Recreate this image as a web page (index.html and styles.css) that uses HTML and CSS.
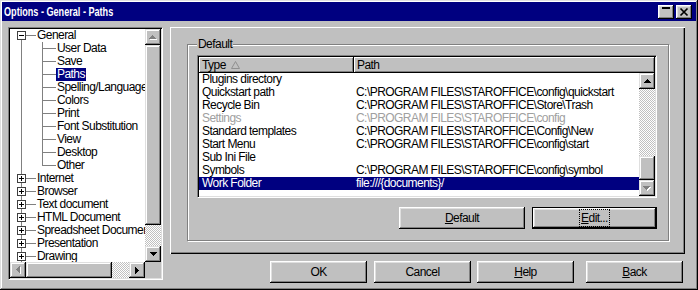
FILE: index.html
```html
<!DOCTYPE html>
<html lang="en">

<head>
    <meta charset="UTF-8">
    <title>Options - General - Paths</title>
    <link rel="stylesheet" href="styles.css">
</head>

<body>
    <div class="window">
        <div class="titlebar">
            <span class="title">Options - General - Paths</span>
            <div class="title-buttons">
                <span class="tbtn"><svg width="16" height="14"><rect x="4" y="2" width="8" height="2" fill="#000"/></svg></span>
                <span class="tbtn"><svg width="16" height="14"><path d="M4.5 3.5l7 7M11.5 3.5l-7 7" stroke="#000" stroke-width="1.7"/></svg></span>
            </div>
        </div>

        <div class="main">
            <!-- Category tree -->
            <div class="tree">
                <div class="tree-view">
                    <div class="tree-items">
                        <div class="node first"><span class="gut"><svg class="box" width="9" height="9"><rect x="0.5" y="0.5" width="8" height="8" fill="#fff" stroke="#404040"/><path d="M2 4.5h5" stroke="#000"/></svg></span><span class="hline"></span><span class="label">General</span></div>
                        <div class="node"><span class="gut"></span><span class="indent"></span><span class="branch"></span><span class="label">User Data</span></div>
                        <div class="node"><span class="gut"></span><span class="indent"></span><span class="branch"></span><span class="label">Save</span></div>
                        <div class="node"><span class="gut"></span><span class="indent"></span><span class="branch"></span><span class="label selected">Paths</span></div>
                        <div class="node"><span class="gut"></span><span class="indent"></span><span class="branch"></span><span class="label">Spelling/Language</span></div>
                        <div class="node"><span class="gut"></span><span class="indent"></span><span class="branch"></span><span class="label">Colors</span></div>
                        <div class="node"><span class="gut"></span><span class="indent"></span><span class="branch"></span><span class="label">Print</span></div>
                        <div class="node"><span class="gut"></span><span class="indent"></span><span class="branch"></span><span class="label">Font Substitution</span></div>
                        <div class="node"><span class="gut"></span><span class="indent"></span><span class="branch"></span><span class="label">View</span></div>
                        <div class="node"><span class="gut"></span><span class="indent"></span><span class="branch"></span><span class="label">Desktop</span></div>
                        <div class="node last"><span class="gut"></span><span class="indent"></span><span class="branch"></span><span class="label">Other</span></div>
                        <div class="node"><span class="gut"><svg class="box" width="9" height="9"><rect x="0.5" y="0.5" width="8" height="8" fill="#fff" stroke="#404040"/><path d="M2 4.5h5M4.5 2v5" stroke="#000"/></svg></span><span class="hline"></span><span class="label">Internet</span></div>
                        <div class="node"><span class="gut"><svg class="box" width="9" height="9"><rect x="0.5" y="0.5" width="8" height="8" fill="#fff" stroke="#404040"/><path d="M2 4.5h5M4.5 2v5" stroke="#000"/></svg></span><span class="hline"></span><span class="label">Browser</span></div>
                        <div class="node"><span class="gut"><svg class="box" width="9" height="9"><rect x="0.5" y="0.5" width="8" height="8" fill="#fff" stroke="#404040"/><path d="M2 4.5h5M4.5 2v5" stroke="#000"/></svg></span><span class="hline"></span><span class="label">Text document</span></div>
                        <div class="node"><span class="gut"><svg class="box" width="9" height="9"><rect x="0.5" y="0.5" width="8" height="8" fill="#fff" stroke="#404040"/><path d="M2 4.5h5M4.5 2v5" stroke="#000"/></svg></span><span class="hline"></span><span class="label">HTML Document</span></div>
                        <div class="node"><span class="gut"><svg class="box" width="9" height="9"><rect x="0.5" y="0.5" width="8" height="8" fill="#fff" stroke="#404040"/><path d="M2 4.5h5M4.5 2v5" stroke="#000"/></svg></span><span class="hline"></span><span class="label">Spreadsheet Document</span></div>
                        <div class="node"><span class="gut"><svg class="box" width="9" height="9"><rect x="0.5" y="0.5" width="8" height="8" fill="#fff" stroke="#404040"/><path d="M2 4.5h5M4.5 2v5" stroke="#000"/></svg></span><span class="hline"></span><span class="label">Presentation</span></div>
                        <div class="node"><span class="gut"><svg class="box" width="9" height="9"><rect x="0.5" y="0.5" width="8" height="8" fill="#fff" stroke="#404040"/><path d="M2 4.5h5M4.5 2v5" stroke="#000"/></svg></span><span class="hline"></span><span class="label">Drawing</span></div>
                    </div>
                    <div class="vscroll">
                        <span class="sbtn"><svg width="8" height="5"><path transform="translate(1 1)" d="M3 0h1v1h1v1h1v1h1v1H0V3h1V2h1V1h1z" fill="#fff"/><path d="M3 0h1v1h1v1h1v1h1v1H0V3h1V2h1V1h1z" fill="#808080"/></svg></span>
                        <span class="thumb tree-vthumb"></span>
                        <span class="track"></span>
                        <span class="sbtn"><svg width="7" height="4"><path d="M0 0h7v1H6v1H5v1H4v1H3V3H2V2H1V1H0z" fill="#000"/></svg></span>
                    </div>
                </div>
                <div class="hscroll-row">
                    <div class="hscroll">
                        <span class="sbtn"><svg width="5" height="8"><path transform="translate(1 1)" d="M4 0v7h-1v-1h-1v-1h-1v-1h-1v-1h1v-1h1v-1h1v-1z" fill="#fff"/><path d="M4 0v7h-1v-1h-1v-1h-1v-1h-1v-1h1v-1h1v-1h1v-1z" fill="#808080"/></svg></span>
                        <span class="thumb tree-hthumb"></span>
                        <span class="track"></span>
                        <span class="sbtn"><svg width="4" height="7"><path d="M0 0h1v1h1v1h1v1h1v1h-1v1h-1v1h-1v1h-1z" fill="#000"/></svg></span>
                    </div>
                    <div class="corner"></div>
                </div>
            </div>

            <div class="right">
                <div class="panel">
                    <div class="group">
                        <span class="legend">Default</span>

                        <!-- Paths list -->
                        <div class="list">
                            <div class="list-header">
                                <span class="col-type">Type <svg class="sort" width="9" height="8"><path d="M4.5 0.5L8.5 7.5H0.5Z" fill="none" stroke="#909090"/></svg></span>
                                <span class="col-path">Path</span>
                            </div>
                            <div class="list-body">
                                <div class="rows">
                                    <div class="row"><span class="c1">Plugins directory</span><span class="c2"></span></div>
                                    <div class="row"><span class="c1">Quickstart path</span><span class="c2">C:\PROGRAM FILES\STAROFFICE\config\quickstart</span></div>
                                    <div class="row"><span class="c1">Recycle Bin</span><span class="c2">C:\PROGRAM FILES\STAROFFICE\Store\Trash</span></div>
                                    <div class="row disabled"><span class="c1">Settings</span><span class="c2">C:\PROGRAM FILES\STAROFFICE\config</span></div>
                                    <div class="row"><span class="c1">Standard templates</span><span class="c2">C:\PROGRAM FILES\STAROFFICE\Config\New</span></div>
                                    <div class="row"><span class="c1">Start Menu</span><span class="c2">C:\PROGRAM FILES\STAROFFICE\config\start</span></div>
                                    <div class="row"><span class="c1">Sub Ini File</span><span class="c2"></span></div>
                                    <div class="row"><span class="c1">Symbols</span><span class="c2">C:\PROGRAM FILES\STAROFFICE\config\symbol</span></div>
                                    <div class="row selected"><span class="c1">Work Folder</span><span class="c2">file:///{documents}/</span></div>
                                </div>
                                <div class="vscroll">
                                    <span class="sbtn"><svg width="7" height="4"><path d="M3 0h1v1h1v1h1v1h1v1H0V3h1V2h1V1h1z" fill="#000"/></svg></span>
                                    <span class="track"></span>
                                    <span class="thumb list-thumb"></span>
                                    <span class="sbtn"><svg width="8" height="5"><path transform="translate(1 1)" d="M0 0h7v1H6v1H5v1H4v1H3V3H2V2H1V1H0z" fill="#fff"/><path d="M0 0h7v1H6v1H5v1H4v1H3V3H2V2H1V1H0z" fill="#808080"/></svg></span>
                                </div>
                            </div>
                        </div>

                        <div class="group-buttons">
                            <button class="btn wide"><u>D</u>efault</button>
                            <button class="btn wide default"><span class="focus"><u>E</u>dit...</span></button>
                        </div>
                    </div>
                </div>

                <div class="actions">
                    <button class="btn">OK</button>
                    <button class="btn cancel">Cancel</button>
                    <button class="btn help"><u>H</u>elp</button>
                    <button class="btn back"><u>B</u>ack</button>
                </div>
            </div>
        </div>
    </div>
</body>

</html>
```

FILE: styles.css
```css
/* Reset */
* {
    box-sizing: border-box;
}

body {
    margin: 0;
    background: #c0c0c0;
    font: 12px "Liberation Sans", Arial, sans-serif;
    letter-spacing: -0.55px;
    color: #000;
}

/* Window frame */
.window {
    width: 698px;
    height: 290px;
    padding: 2px;
    background: #c0c0c0;
    box-shadow: inset -1px -1px #000, inset 1px 1px #dfdfdf, inset -2px -2px #808080, inset 2px 2px #fff;
    display: flex;
    flex-direction: column;
}

.titlebar {
    height: 19px;
    background: #000080;
    color: #fff;
    display: flex;
    align-items: center;
    justify-content: space-between;
    padding: 0 4px 0 2px;
}

.title {
    display: inline-block;
    font-weight: bold;
    font-size: 13px;
    letter-spacing: 0;
    white-space: nowrap;
    transform: scaleX(0.7);
    transform-origin: left center;
}

.title-buttons {
    display: flex;
    gap: 2px;
}

.tbtn {
    width: 16px;
    height: 14px;
    display: block;
    background: #c0c0c0;
    box-shadow: inset -1px -1px #000, inset 1px 1px #fff, inset -2px -2px #808080, inset 2px 2px #dfdfdf;
}

.tbtn svg {
    display: block;
}

.main {
    display: flex;
    gap: 7px;
    padding: 6px 0 0 6px;
}

/* Tree view */
.tree {
    width: 155px;
    height: 253px;
    border: 1px solid;
    border-color: #808080 #fff #fff #808080;
    padding: 1px;
    box-shadow: inset 1px 1px #000, inset -1px -1px #dfdfdf;
    display: flex;
    flex-direction: column;
}

.tree-view {
    display: flex;
    height: 233px;
}

.tree-items {
    flex: 1;
    overflow: hidden;
    background: #fff;
}

.node {
    display: flex;
    height: 13px;
    line-height: 13px;
    white-space: nowrap;
}

.gut {
    width: 16px;
    flex: none;
    display: flex;
    align-items: center;
    background: linear-gradient(#808080, #808080) 11px 0 / 1px 100% no-repeat;
}

.first .gut {
    background-position: 11px 7px;
    background-size: 1px 6px;
}

.box {
    display: block;
    margin-left: 7px;
}

.hline {
    width: 10px;
    flex: none;
    background: linear-gradient(#808080, #808080) 0 6px / 100% 1px no-repeat;
}

.indent {
    width: 16px;
    flex: none;
}

.branch {
    width: 14px;
    flex: none;
    background:
        linear-gradient(#808080, #808080) 0 0 / 1px 100% no-repeat,
        linear-gradient(#808080, #808080) 0 6px / 100% 1px no-repeat;
}

.last .branch {
    background-size: 1px 7px, 100% 1px;
}

.label {
    padding: 0 1px;
}

.label.selected {
    background: #000080;
    color: #fff;
}

/* Scrollbars */
.vscroll {
    width: 16px;
    flex: none;
    display: flex;
    flex-direction: column;
    background: #c0c0c0;
}

.hscroll-row {
    display: flex;
    height: 16px;
    background: #c0c0c0;
}

.hscroll {
    flex: 1;
    display: flex;
}

.corner {
    width: 16px;
}

.sbtn,
.thumb {
    width: 16px;
    height: 16px;
    flex: none;
    display: flex;
    align-items: center;
    justify-content: center;
    background: #c0c0c0;
    box-shadow: inset -1px -1px #000, inset 1px 1px #dfdfdf, inset -2px -2px #808080, inset 2px 2px #fff;
}

.sbtn svg {
    display: block;
}

.track {
    flex: 1;
    background: repeating-conic-gradient(#fff 0 25%, #c0c0c0 0 50%) 0 0 / 2px 2px;
}

.tree-vthumb {
    height: 180px;
}

.tree-hthumb {
    width: 86px;
}

.list-thumb {
    height: 24px;
}

/* Right side */
.right {
    width: 515px;
    display: flex;
    flex-direction: column;
    gap: 7px;
}

.panel {
    height: 227px;
    padding: 17px 16px 13px 17px;
    box-shadow: inset 1px 1px #fff, inset -1px -1px #000, inset -2px -2px #808080;
    display: flex;
}

.group {
    flex: 1;
    border: 1px solid #808080;
    box-shadow: 1px 1px #fff, inset 1px 1px #fff;
    padding: 0 11px 11px 9px;
    display: flex;
    flex-direction: column;
}

.legend {
    align-self: flex-start;
    margin-top: -8px;
    padding: 0 1px;
    line-height: 14px;
    background: #c0c0c0;
}

/* Paths list */
.list {
    margin-top: 4px;
    height: 143px;
    border: 1px solid;
    border-color: #808080 #fff #fff #808080;
    padding: 1px;
    box-shadow: inset 1px 1px #000, inset -1px -1px #dfdfdf;
    background: #fff;
    display: flex;
    flex-direction: column;
}

.list-header {
    display: flex;
    height: 16px;
    line-height: 16px;
    background: #c0c0c0;
}

.col-type,
.col-path {
    padding-left: 3px;
    display: flex;
    align-items: center;
    box-shadow: inset -1px -1px #000, inset 1px 1px #fff, inset -2px -2px #808080;
}

.col-type {
    width: 155px;
}

.col-path {
    flex: 1;
}

.sort {
    display: block;
    margin-left: 5px;
}

.list-body {
    flex: 1;
    display: flex;
    min-height: 0;
}

.rows {
    flex: 1;
}

.row {
    display: flex;
    height: 13px;
    line-height: 13px;
    white-space: nowrap;
}

.row .c1 {
    width: 155px;
    padding-left: 3px;
}

.row .c2 {
    padding-left: 2px;
}

.row.disabled {
    color: #a0a0a0;
}

.row.selected {
    background: #000080;
    color: #fff;
}

/* Buttons */
.btn {
    width: 97px;
    height: 22px;
    padding: 0;
    border: 0;
    background: #c0c0c0;
    font: inherit;
    letter-spacing: inherit;
    color: #000;
    box-shadow: inset -1px -1px #000, inset 1px 1px #fff, inset -2px -2px #808080, inset 2px 2px #dfdfdf;
}

.btn.wide {
    width: 126px;
}

.btn.default {
    width: 125px;
    border: 1px solid #000;
}

.focus {
    outline: 1px dotted #000;
    outline-offset: 1px;
}

.group-buttons {
    display: flex;
    justify-content: flex-end;
    gap: 7px;
    margin-top: 9px;
}

.actions {
    display: flex;
    justify-content: flex-end;
    height: 22px;
    padding-right: 2px;
}

.cancel {
    margin-left: 7px;
}

.help {
    margin-left: 6px;
}

.back {
    margin-left: 12px;
}
```
